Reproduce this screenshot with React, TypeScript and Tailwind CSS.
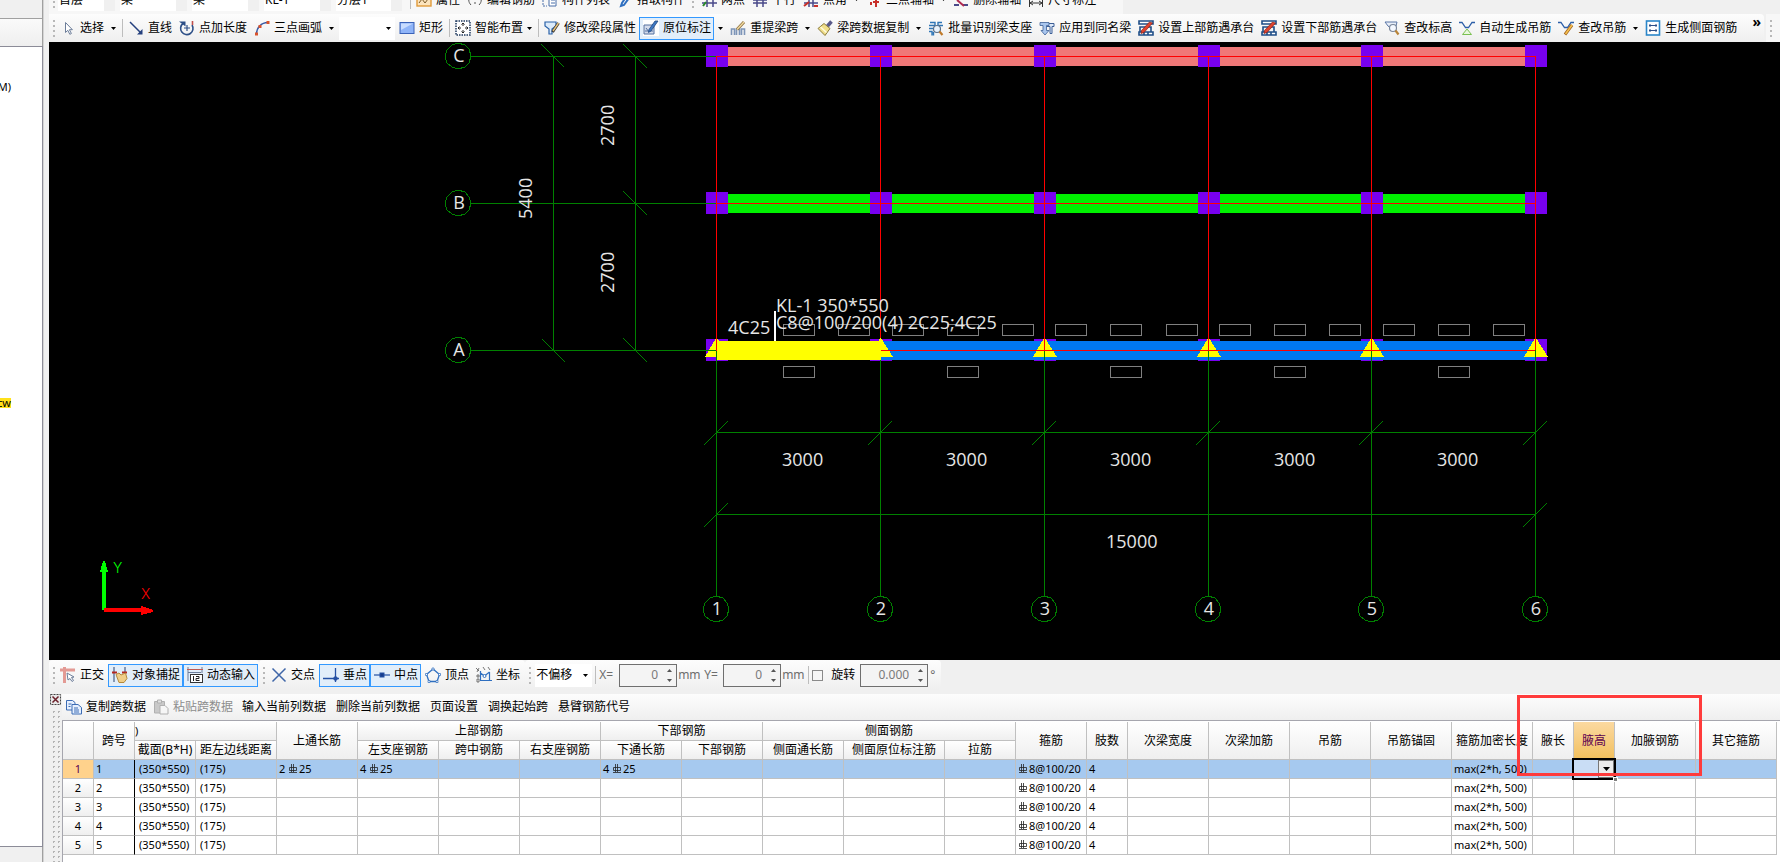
import type { ReactNode } from 'react';

const icons: Record<string, ReactNode> = {
  cursor: <path d="M5.5 2.5v10l2.3-2.2 2 4 1.6-.8-2-3.8h3z" fill="#fff" stroke="#6c7d99" />,
  line: (
    <g stroke="#25407e" fill="#25407e">
      <path d="M2 2l11 11" strokeWidth="1.5" />
      <path d="M14.5 14.5v-5.5l-5.5 5.5z" stroke="none" />
    </g>
  ),
  addLength: (
    <g fill="none" stroke="#2d4f87" strokeWidth="1.6">
      <path d="M4 3.500a6.200 6.200 0 1 0 9 1.500" />
      <path d="M8 5v6M5 8h6" strokeWidth="1.200" />
      <path d="M0 1.500h6.500v5z" fill="#2d4f87" stroke="none" />
      <path d="M13.500 1v4" stroke="#c0504d" />
    </g>
  ),
  arc: (
    <g fill="none" stroke="#3b5ba5" strokeWidth="1.4">
      <path d="M2.500 14C2.500 8 7 2.500 14 2.500" />
      <path d="M1 12.500h3v3H1zM4.500 5h3v3h-3zM12.500 1h3v3h-3z" fill="#d9532c" stroke="none" />
    </g>
  ),
  rect: (
    <g>
      <rect x="1" y="2.500" width="14" height="11" fill="#8fb4f8" stroke="#3a62b8" />
      <path d="M2 3.500h12L2 10z" fill="#c8dcff" />
    </g>
  ),
  smart: (
    <g>
      <rect x="1" y="1" width="14" height="14" fill="#fff" stroke="#1f3a5f" strokeWidth="1.5" strokeDasharray="1.5 1" />
      <path d="M8 3v3M8 10v3M3 8h3M10 8h3M6.500 4.500L8 3l1.500 1.500M6.500 11.500L8 13l1.500-1.500M4.500 6.500L3 8l1.500 1.500M11.500 6.500L13 8l-1.500 1.500" fill="none" stroke="#222" />
    </g>
  ),
  editProps: (
    <g fill="none">
      <path d="M1 2h11v4L8 9v5H5V9L1 6z" fill="#dcebfa" stroke="#2b62a8" strokeWidth="1.200" />
      <path d="M14.500 3l-6 9" stroke="#333" strokeWidth="3" />
      <path d="M14.500 3l-5.500 8" stroke="#e8c27a" strokeWidth="1.5" />
    </g>
  ),
  original: (
    <g>
      <rect width="16" height="16" fill="#fff" />
      <path d="M1 5h10v9H1z" fill="#d4dcec" stroke="#54719f" />
      <path d="M3 8l3 4 2-4M2 11h8" stroke="#54719f" fill="none" />
      <path d="M15 1L8 11l-2.500 1.500.5-3L12 1z" fill="#3d78c4" stroke="#24497f" strokeWidth=".8" />
    </g>
  ),
  respan: (
    <g fill="none">
      <path d="M1.500 15V9h3v6M6.500 15V9h3v6M11.500 15V9h3v6" stroke="#7d95b8" strokeWidth="1.6" />
      <path d="M14 2L7 9.500" stroke="#8a6d3b" strokeWidth="3" />
      <path d="M14 2L7 9.500" stroke="#f0d9a0" strokeWidth="1.5" />
    </g>
  ),
  brush: (
    <g>
      <path d="M14.500 1.500l-4 4.500" stroke="#5a5a8a" strokeWidth="3.500" />
      <path d="M7 3.500l6 5-5 7-7-7z" fill="#f1df8a" stroke="#8a7a3a" />
      <path d="M3.500 7l6 5.500" stroke="#fffbe0" strokeWidth="1.5" />
    </g>
  ),
  batch: (
    <g fill="none" stroke="#2e75b6">
      <path d="M2 2.500h5v3H1M14 2.500h-4v3h5M1 8.500h4M1 11.500h3v4M5.500 12v3.500" strokeWidth="1.400" />
      <circle cx="9" cy="9" r="3.500" fill="#e8f2fc" stroke="#5a6f88" strokeWidth="1.200" />
      <path d="M11.500 11.500l3 3.500" stroke="#c07a2a" strokeWidth="2.200" />
    </g>
  ),
  applySame: (
    <g fill="#dfeafa" stroke="#3c5f96">
      <path d="M5 3.500h10v3h-2v7h-2v-7H5z" />
      <path d="M1 2.500h9v3H7.500v5H10l-4 4.500-4-4.500h2v-5H1z" fill="#a9c6ee" strokeWidth=".8" />
    </g>
  ),
  cap: (
    <g>
      <path d="M1 1h14v3H1zM1 12h14v3H1z" fill="#fff" stroke="#1f4e88" strokeWidth="1.600" />
      <path d="M2 12V7h11v5M6 12v3M10 12v3" fill="none" stroke="#1f4e88" strokeWidth="1.600" />
      <path d="M14.500 3L6 12.500l-3 1 .5-3L11.500 2z" fill="#e0432f" stroke="#8a1f14" strokeWidth=".7" />
    </g>
  ),
  elevation: (
    <g>
      <path d="M1 2h12l-1 4H8.500v3.500L4 6z" fill="#e8eef8" stroke="#5b76a6" />
      <circle cx="9" cy="8" r="3.500" fill="#f4f8ff" stroke="#7a869a" strokeWidth="1.200" />
      <path d="M11.500 10.500l3 4" stroke="#b9853a" strokeWidth="2.200" />
    </g>
  ),
  hanging: (
    <g fill="none">
      <path d="M0 2.500h3l3.500 5h3l3.500-5h3" stroke="#2d5fa8" strokeWidth="1.300" />
      <path d="M8 9l4.500 5.500h-9z" fill="#e9f8dd" stroke="#79c050" />
    </g>
  ),
  hangingEdit: (
    <g fill="none">
      <path d="M0 2.500h3l3.500 5h3l3.500-5h3" stroke="#2d5fa8" strokeWidth="1.300" />
      <path d="M14 5l-7 9.500" stroke="#a2621a" strokeWidth="3" />
      <path d="M14 5l-6.500 9" stroke="#f5c050" strokeWidth="1.600" />
    </g>
  ),
  side: (
    <g fill="none">
      <rect x="1.500" y="1" width="13" height="14" fill="#fff" stroke="#2b86c9" strokeWidth="1.600" />
      <path d="M4 5.500h8M4 10.500h8M5 4v3M11 4v3M5 9v3M11 9v3" stroke="#2d4f87" />
    </g>
  ),
  ortho: (
    <g fill="none">
      <path d="M0 3h15M4.500 0v16" stroke="#e39a94" strokeWidth="3" />
      <path d="M7 6l1 7 2-1.500 2 3 1.500-1-2-3L14 10z" fill="#fff" stroke="#6c7d99" />
    </g>
  ),
  snap: (
    <g fill="none">
      <path d="M2 0v15M13 0v6" stroke="#4a5f85" strokeWidth="1.200" />
      <path d="M0 5.500h5M10 5.500h5" stroke="#b3261e" strokeWidth="2" />
      <path d="M4 7.500l3-1.500 2 2 4.500-2 1.500 5.500-3 4H7z" fill="#f0ce88" stroke="#b58a3c" />
    </g>
  ),
  dynamic: (
    <g fill="none">
      <path d="M1 0v14M15 0v6M1 5.500h13" stroke="#6c7d99" />
      <path d="M0 2.500h16" stroke="#c05a50" />
      <rect x="3.500" y="7.500" width="12" height="8" fill="#fff" stroke="#333" />
      <path d="M6.500 9v5M9 9.500h3v2H9v2h3.500" stroke="#222" />
    </g>
  ),
  cross: <path d="M1.500 1.500l13 13M14.500 1.500l-13 13" stroke="#3f66a8" strokeWidth="1.5" />,
  perp: (
    <g stroke="#2450a4">
      <path d="M0 11.500h16M12.500 1v14" strokeWidth="1.300" fill="none" />
      <circle cx="12.500" cy="11.500" r="1.800" fill="#2450a4" />
    </g>
  ),
  mid: (
    <g stroke="#2450a4">
      <path d="M0 8h16" strokeWidth="1.200" />
      <rect x="6" y="6" width="4" height="4" fill="#173c8c" />
    </g>
  ),
  vertex: (
    <g fill="none" stroke="#2f6fc0">
      <path d="M8 2l6.500 5.500-2.500 7H4l-2.500-7z" strokeWidth="1.300" />
      <path d="M7 1h2v2H7zM.5 6.500h2v2h-2zM13.500 6.500h2v2h-2zM3 13.500h2v2H3zM11 13.500h2v2h-2z" fill="#fff" strokeWidth=".7" />
    </g>
  ),
  coord: (
    <g fill="none" stroke="#2f6fc0">
      <path d="M4.500 4v9.500H16M4.500 6l4 3 5-4M13.500 5v8" strokeWidth="1.200" />
      <path d="M0 1l3 3M3 1L1 5M1 8h2v2H1zM1 12h2v3H1zM7 0l2 3M12 0l2 3" stroke="#555" strokeWidth=".8" />
      <circle cx="8.500" cy="9" r="1.5" fill="#fff" />
    </g>
  ),
  copy: (
    <g fill="#e6f0ff" stroke="#3c6cb4">
      <path d="M.5 1.500h6l2.500 2V11H.5z" />
      <path d="M6 5.500h6l3.500 3V15H6z" />
      <path d="M2.500 5h3M2.500 7.500h2M8 9h4M8 11h5M8 13h5" />
    </g>
  ),
  paste: (
    <g fill="#e2e2e2" stroke="#b0b0b0">
      <path d="M1.500 2.500h10V14h-10z" fill="#c9c9c9" />
      <path d="M4.500 1h4v3h-4z" />
      <path d="M7 6.500h5l3 3V15H7z" fill="#f6f6f6" />
    </g>
  ),
  props: (
    <g>
      <rect x="1" y="1" width="14" height="13" fill="#fce4bd" stroke="#e09a3a" strokeWidth="1.400" />
      <path d="M3 11l3-4 3 4 3-4" stroke="#7a5a2a" fill="none" />
    </g>
  ),
  editBar: <path d="M4 3C1 6 1 10 4 13M12 3c3 3 3 7 0 10M7 11h2" stroke="#555" fill="none" />,
  list: (
    <g fill="#fff" stroke="#4a6fa8">
      <path d="M1 8v6h4" fill="none" strokeDasharray="2 1" />
      <path d="M7 3h7v11H7z" />
      <path d="M9 8h4M9 11h4" />
    </g>
  ),
  pick: <path d="M12 6l-5 7-3 1 1-3 4-6" stroke="#2f6fc0" strokeWidth="2" fill="none" />,
  axisTwo: (
    <g>
      <path d="M1 11h15M6 4v11M12 4v11" stroke="#4a4a8a" strokeWidth="1.5" />
      <path d="M2 14l3-4" stroke="#2a8a2a" strokeWidth="2" />
    </g>
  ),
  axisPar: <path d="M1 11h14M5 4v11M11 4v11M1 8h14" stroke="#4a4a8a" strokeWidth="1.5" />,
  axisAngle: (
    <g stroke="#4a4a8a" strokeWidth="1.5">
      <path d="M1 11h14M6 5v10M10 5v10" />
      <path d="M1 14l5-4M11 14h4" stroke="#c8302a" strokeWidth="2" />
    </g>
  ),
  axisThree: <path d="M5 10v3M10 6v9M7 10h6" stroke="#c8302a" strokeWidth="2" />,
  axisDel: (
    <g strokeWidth="2">
      <path d="M1 13h5M10 13h5" stroke="#4a4a8a" />
      <path d="M4 8l7 6" stroke="#b02a50" />
    </g>
  ),
  dim: <path d="M1.500 5v10M14.500 5v10M2 11h12M5 9l-3 2 3 2M11 9l3 2-3 2" stroke="#333" fill="none" />,
};

function Icon({ name }: { name: string }) {
  return (
    <svg viewBox="0 0 16 16" className="size-4 shrink-0" aria-hidden="true">
      {icons[name]}
    </svg>
  );
}

function Caret() {
  return (
    <svg viewBox="0 0 5 3" className="h-[3px] w-[5px] shrink-0" aria-hidden="true">
      <path d="M0 0h5L2.5 3z" fill="#000" />
    </svg>
  );
}

function Grip() {
  return (
    <div className="ml-1 flex w-[3px] shrink-0 flex-col gap-[3px]">
      {[0, 1, 2, 3].map((i) => (
        <span key={i} className="size-[2px] bg-[#b8b8b8]"></span>
      ))}
    </div>
  );
}

function Separator() {
  return <div className="mr-px ml-[3px] h-[18px] w-px shrink-0 bg-[#bdbdbd]"></div>;
}

type ToolProps = { icon?: string; label: string; pressed?: boolean; caret?: boolean; disabled?: boolean };

function Tool({ icon, label, pressed, caret, disabled }: ToolProps) {
  return (
    <button
      type="button"
      disabled={disabled}
      aria-pressed={pressed}
      className={`flex h-[23px] shrink-0 items-center gap-1 pr-[3px] pl-1 ${pressed ? 'bg-[#e2eefa] outline-1 -outline-offset-1 outline-[#3399ff]' : ''} ${disabled ? 'text-[#8d8d8d]' : ''}`}
    >
      {icon && <Icon name={icon} />}
      {label}
      {caret && <Caret />}
    </button>
  );
}

function DropButton({ label }: { label: string }) {
  return (
    <button type="button" aria-label={label} className="flex h-[23px] w-3 shrink-0 items-center justify-center">
      <Caret />
    </button>
  );
}

function TopCombo({ label, value, width }: { label: string; value: string; width: string }) {
  return (
    <div className={`mr-[5px] flex h-[22px] shrink-0 bg-white ${width}`}>
      <select aria-label={label} className="min-w-0 flex-1 appearance-none px-px">
        <option>{value}</option>
      </select>
      <span className="w-[11px] bg-[#f0f0f0]"></span>
    </div>
  );
}

function TopToolbar() {
  return (
    <div className="flex h-[14px] items-end overflow-hidden bg-[#f0f0f0]">
      <div className="flex h-[36px] shrink-0 items-center bg-[#f7f7f7] pt-[7px] pr-6">
        <div className="mr-[2px]">
          <Grip />
        </div>
        <TopCombo label="楼层" value="首层" width="w-[57px]" />
        <TopCombo label="构件类别" value="梁" width="w-[67px]" />
        <TopCombo label="构件类型" value="梁" width="w-[67px]" />
        <TopCombo label="构件名称" value="KL-1" width="w-[67px]" />
        <TopCombo label="分层" value="分层1" width="w-[66px]" />
        <Separator />
        <Tool icon="props" label="属性" />
        <Tool icon="editBar" label="编辑钢筋" />
        <Tool icon="list" label="构件列表" />
        <Tool icon="pick" label="拾取构件" />
        <div className="mr-[2px]">
          <Grip />
        </div>
        <Tool icon="axisTwo" label="两点" />
        <Tool icon="axisPar" label="平行" />
        <Tool icon="axisAngle" label="点角" />
        <DropButton label="点角选项" />
        <Tool icon="axisThree" label="三点辅轴" />
        <DropButton label="三点辅轴选项" />
        <Tool icon="axisDel" label="删除辅轴" />
        <Tool icon="dim" label="尺寸标注" />
      </div>
    </div>
  );
}

function DrawToolbar() {
  return (
    <div className="flex h-7 bg-[#f0f0f0]">
      <div className="flex min-w-0 flex-1 items-center overflow-hidden rounded-r bg-linear-to-b from-[#fdfdfd] to-[#efefef]">
        <Grip />
        <Tool icon="cursor" label="选择" />
        <DropButton label="选择选项" />
        <Separator />
        <Tool icon="line" label="直线" />
        <Tool icon="addLength" label="点加长度" />
        <Tool icon="arc" label="三点画弧" />
        <DropButton label="画弧选项" />
        <div className="relative ml-[2px] flex h-[23px] w-[56px] shrink-0 items-center bg-white">
          <select aria-label="半径" className="h-full w-full appearance-none">
            <option></option>
          </select>
          <span className="pointer-events-none absolute right-1">
            <Caret />
          </span>
        </div>
        <Tool icon="rect" label="矩形" />
        <Separator />
        <Tool icon="smart" label="智能布置" caret />
        <Separator />
        <Tool icon="editProps" label="修改梁段属性" />
        <Tool icon="original" label="原位标注" pressed />
        <DropButton label="标注选项" />
        <Tool icon="respan" label="重提梁跨" />
        <DropButton label="重提梁跨选项" />
        <Tool icon="brush" label="梁跨数据复制" />
        <DropButton label="数据复制选项" />
        <Tool icon="batch" label="批量识别梁支座" />
        <Tool icon="applySame" label="应用到同名梁" />
        <Tool icon="cap" label="设置上部筋遇承台" />
        <Tool icon="cap" label="设置下部筋遇承台" />
        <Tool icon="elevation" label="查改标高" />
        <Tool icon="hanging" label="自动生成吊筋" />
        <Tool icon="hangingEdit" label="查改吊筋" />
        <DropButton label="查改吊筋选项" />
        <Tool icon="side" label="生成侧面钢筋" />
        <button type="button" aria-label="更多" className="ml-auto h-full shrink-0 pr-[3px] pb-3 text-sm leading-4 font-bold">
          »
        </button>
      </div>
      <div className="ml-[2px] flex w-[14px] shrink-0 items-center bg-[#f7f7f7]">
        <Grip />
      </div>
    </div>
  );
}

/* Plan view */
const axisX = [667, 831, 995, 1159, 1322, 1486];
const axisY = [
  { name: 'C', y: 14 },
  { name: 'B', y: 161 },
  { name: 'A', y: 308 },
];
const topSlots = [734, 789, 843, 898, 953, 1006, 1061, 1117, 1170, 1225, 1280, 1334, 1389, 1444];
const bottomSlots = [734, 898, 1061, 1225, 1389];
const GREEN = '#008000';
const RED = '#ff0000';

function Bubble({ x, y, label }: { x: number; y: number; label: string }) {
  const points = Array.from({ length: 12 }, (_, i) => {
    const a = (i * Math.PI) / 6;
    return `${Math.round(x + 13 * Math.cos(a))},${Math.round(y + 13 * Math.sin(a))}`;
  }).join(' ');
  return (
    <g>
      <polygon points={points} fill="none" stroke={GREEN} shapeRendering="crispEdges" />
      <text x={x + 1} y={y + 6} textAnchor="middle">
        {label}
      </text>
    </g>
  );
}

function Support({ x }: { x: number }) {
  return <path d={`M${x} 296h1l12 19h-24z`} fill="#ffff00" />;
}

function PlanCanvas() {
  const first = axisX[0];
  const last = axisX[5];
  return (
    <svg
      className="min-h-[560px] w-full flex-1 bg-black font-['Open_Sans','Noto_Sans',sans-serif] text-[18px]"
      fill="#e6e6e6"
      role="img"
      aria-label="梁平面图"
    >
      <g shapeRendering="crispEdges">
        {/* beams on C and B, columns on all axes */}
        <rect x={first} y="5" width={last - first} height="19" fill="#f07878" />
        <rect x={first} y="152" width={last - first} height="19" fill="#00f000" />
        {axisY.map((row) =>
          axisX.map((x) => <rect key={row.name + x} x={x - 10} y={row.y - 11} width="22" height="22" fill="#7800f0" />)
        )}
        <rect x={first} y="299" width={last - first} height="19" fill="#0078f0" />
        {axisX.map((x) => (
          <Support key={x} x={x} />
        ))}

        {/* grid lines */}
        <g stroke={GREEN}>
          {axisY.map((row) => (
            <path key={row.name} d={`M422 ${row.y + 0.5}H${first}`} />
          ))}
          {axisX.map((x) => (
            <path key={x} d={`M${x + 0.5} 308V554`} />
          ))}
          <path d="M504.5 14V308M586.5 14V308" />
          <path d={`M${first} 390.5H${last}M${first} 472.5H${last}`} />
          {axisY.map((row) => (
            <path key={row.name} d={`M574 ${row.y - 12}l24 24`} />
          ))}
          <path d="M492 2l23 23M493 297l23 23" />
          {axisX.map((x) => (
            <path key={x} d={`M${x - 12} 403l24-24`} />
          ))}
          <path d={`M${first - 12} 485l24-24M${last - 12} 485l24-24`} />
        </g>
        <g stroke={RED}>
          {axisY.map((row) => (
            <path key={row.name} d={`M${first} ${row.y + 0.5}H${last}`} />
          ))}
          {axisX.map((x) => (
            <path key={x} d={`M${x + 0.5} 14V308`} />
          ))}
        </g>

        {/* selected span */}
        <rect x="668" y="299" width="164" height="19" fill="#ffff00" />
        <Support x={axisX[1]} />
        <path d="M832 308.5h14" stroke={RED} />

        <g fill="none" stroke="#808080">
          {topSlots.map((x) => (
            <rect key={x} x={x + 0.5} y="282.5" width="31" height="11" />
          ))}
          {bottomSlots.map((x) => (
            <rect key={x} x={x + 0.5} y="324.5" width="31" height="11" />
          ))}
        </g>
        <path d="M725 269h2v30h-2z" fill="#fff" />
      </g>

      {axisY.map((row) => (
        <Bubble key={row.name} x={409} y={row.y} label={row.name} />
      ))}
      {axisX.map((x, i) => (
        <Bubble key={x} x={x} y={567} label={String(i + 1)} />
      ))}

      <text x="727" y="270">KL-1 350*550</text>
      <text x="727" y="287">C8@100/200(4) 2C25;4C25</text>
      <text x="679" y="292">4C25</text>
      {axisX.slice(0, 5).map((x) => (
        <text key={x} x={x + 66} y="424">
          3000
        </text>
      ))}
      <text x="1057" y="506">15000</text>
      <text transform="translate(565 104) rotate(-90)">2700</text>
      <text transform="translate(565 251) rotate(-90)">2700</text>
      <text transform="translate(483 177) rotate(-90)">5400</text>

      {/* UCS marker */}
      <g shapeRendering="crispEdges">
        <path d="M53 568V530h-2l3-11h2l3 11h-2v38z" fill="#00ff00" />
        <path d="M55 566h37v-2l12 4v2l-12 3v-3H55z" fill="#ff0000" />
      </g>
      <g className="font-['Inter',sans-serif] text-[14px] font-light">
        <text x="64" y="531" fill="#00ff00">Y</text>
        <text x="92" y="557" fill="#ff0000">X</text>
      </g>
    </svg>
  );
}

function Spin({ id, value, width }: { id: string; value: string; width: string }) {
  return (
    <div className={`flex h-[23px] shrink-0 border border-[#6f6f6f] bg-[#f4f4f4] ${width}`}>
      <input id={id} defaultValue={value} className="min-w-0 flex-1 bg-transparent pr-[6px] text-right text-[#7a7a7a]" />
      <span className="flex w-3 flex-col justify-between py-1 pl-[3px]">
        <button type="button" aria-label="增加" className="h-[3px] w-[5px]">
          <svg viewBox="0 0 5 3" className="block h-[3px] w-[5px]">
            <path d="M0 3h5L2.5 0z" fill="#555" />
          </svg>
        </button>
        <button type="button" aria-label="减少" className="h-[3px] w-[5px]">
          <svg viewBox="0 0 5 3" className="block h-[3px] w-[5px]">
            <path d="M0 0h5L2.5 3z" fill="#555" />
          </svg>
        </button>
      </span>
    </div>
  );
}

function SnapToolbar() {
  const group = 'flex h-[30px] shrink-0 items-center rounded bg-linear-to-b from-[#fdfdfd] to-[#efefef]';
  return (
    <div className="flex h-[34px] items-start overflow-hidden bg-[#f0f0f0]">
      <div className={`${group} pr-px`}>
        <Grip />
        <Tool icon="ortho" label="正交" />
        <div className="ml-px flex">
          <Tool icon="snap" label="对象捕捉" pressed />
          <Tool icon="dynamic" label="动态输入" pressed />
        </div>
      </div>
      <div className={`${group} pr-[2px]`}>
        <Grip />
        <div className="mx-px">
          <Tool icon="cross" label="交点" />
        </div>
        <Tool icon="perp" label="垂点" pressed />
        <Tool icon="mid" label="中点" pressed />
        <Tool icon="vertex" label="顶点" />
        <Tool icon="coord" label="坐标" />
      </div>
      <div className={`${group} pr-[6px] text-[#6d6d6d]`}>
        <Grip />
        <div className="relative ml-[3px] flex h-[23px] w-[57px] items-center bg-white text-black">
          <select aria-label="偏移方式" className="h-full w-full appearance-none pl-px">
            <option>不偏移</option>
          </select>
          <span className="pointer-events-none absolute right-1">
            <Caret />
          </span>
        </div>
        <Separator />
        <label htmlFor="offset-x" className="ml-[2px] w-5">X=</label>
        <Spin id="offset-x" value="0" width="w-[58px]" />
        <span className="ml-px w-6">mm</span>
        <label htmlFor="offset-y" className="ml-[2px] w-[19px]">Y=</label>
        <Spin id="offset-y" value="0" width="w-[58px]" />
        <span className="ml-px w-[23px]">mm</span>
        <Separator />
        <input
          id="rotate"
          type="checkbox"
          className="mr-2 ml-[2px] size-[11px] appearance-none border border-[#8a8a8a] bg-[#f6f6f6]"
        />
        <label htmlFor="rotate" className="mr-[5px] text-black">旋转</label>
        <Spin id="rotate-angle" value="0.000" width="w-[68px]" />
        <label htmlFor="rotate-angle" className="ml-[2px]">°</label>
      </div>
    </div>
  );
}

/* Span data table */
const colWidths = [31, 41, 61, 81, 81, 81, 81, 81, 81, 81, 81, 101, 71, 71, 41, 81, 81, 81, 81, 81, 41, 41, 81, 81];
const tailHeads = ['箍筋', '肢数', '次梁宽度', '次梁加筋', '吊筋', '吊筋锚固', '箍筋加密长度', '腋长', '腋高', '加腋钢筋', '其它箍筋'];
const subHeads = [
  '截面(B*H)', '距左边线距离', '左支座钢筋', '跨中钢筋', '右支座钢筋', '下通长筋', '下部钢筋', '侧面通长筋', '侧面原位标注筋', '拉筋',
];
const spans = [1, 2, 3, 4, 5];

const head = 'border-r border-b border-[#c0c0c0] bg-linear-to-b from-white to-[#efefef] p-0 text-center font-normal';

function Rebar({ count, size }: { count?: string; size: string }) {
  return (
    <span className="flex items-center">
      {count && <span className="w-[9px]">{count}</span>}
      <svg viewBox="0 0 10 10" className="mr-px size-[10px] shrink-0" role="img" aria-label="三级钢">
        <path d="M1.5 3.5h7v3h-7zM3.5 0v8M5.5 0v8M1 8.5h8" fill="none" stroke="#222" strokeWidth=".8" />
      </svg>
      {size}
    </span>
  );
}

function cellText(col: number, row: number): ReactNode {
  const selected = row === 0;
  switch (col) {
    case 1:
      return spans[row];
    case 2:
      return '(350*550)';
    case 3:
      return '(175)';
    case 4:
      return selected && <Rebar count="2" size="25" />;
    case 5:
    case 8:
      return selected && <Rebar count="4" size="25" />;
    case 13:
      return <Rebar size="8@100/20" />;
    case 14:
      return '4';
    case 19:
      return 'max(2*h, 500)';
    default:
      return null;
  }
}

function SpanTable() {
  return (
    <table className="w-full table-fixed border-separate border-spacing-0">
      <colgroup>
        {colWidths.map((w, i) => (
          <col key={i} style={{ width: w }} />
        ))}
      </colgroup>
      <thead>
        <tr className="h-[19px]">
          <th rowSpan={2} className={head} aria-label="行"></th>
          <th rowSpan={2} className={head}>跨号</th>
          <th colSpan={2} className="border-r border-b border-[#c0c0c0] bg-linear-to-b from-white to-[#efefef] p-0 text-left text-[11px] leading-4 font-normal">
            )
          </th>
          <th rowSpan={2} className={head}>上通长筋</th>
          <th colSpan={3} className={head}>上部钢筋</th>
          <th colSpan={2} className={head}>下部钢筋</th>
          <th colSpan={3} className={head}>侧面钢筋</th>
          {tailHeads.map((name) => (
            <th
              key={name}
              rowSpan={2}
              className={
                name === '腋高'
                  ? 'border-r border-b border-[#c0c0c0] bg-linear-to-b from-[#fbd9a0] to-[#f2c05c] p-0 font-normal text-[#5c0050]'
                  : head
              }
            >
              {name}
            </th>
          ))}
        </tr>
        <tr className="h-[19px]">
          {subHeads.map((name) => (
            <th key={name} className={head}>
              {name}
            </th>
          ))}
        </tr>
      </thead>
      <tbody className="text-[11px] leading-4">
        {spans.map((span, row) => (
          <tr key={span} className={`h-[19px] ${row === 0 ? 'bg-[#a6c9ef]' : 'bg-white'}`}>
            {colWidths.map((_, col) => {
              if (col === 0) {
                return (
                  <th
                    key={col}
                    scope="row"
                    className={row === 0 ? 'border-r border-b border-[#c0c0c0] bg-[#ffd28c] p-0 font-normal text-[#5c0050]' : head}
                  >
                    {span}
                  </th>
                );
              }
              if (col === 21 && row === 0) {
                return (
                  <td key={col} className="relative border-r border-b border-[#c0c0c0] p-0">
                    <div className="absolute -inset-[2px] flex border-2 border-black bg-[#c9ddf5]">
                      <select aria-label="腋高" className="min-w-0 flex-1 appearance-none">
                        <option></option>
                      </select>
                      <span className="pointer-events-none flex w-4 items-center justify-center border border-[#777] bg-[#ececec]">
                        <svg viewBox="0 0 7 4" className="h-1 w-[7px]">
                          <path d="M0 0h7L3.5 4z" fill="#000" />
                        </svg>
                      </span>
                      <span className="absolute -right-[4px] -bottom-[4px] size-[5px] border border-white bg-[#808080]"></span>
                    </div>
                  </td>
                );
              }
              return (
                <td
                  key={col}
                  className={`overflow-hidden border-r border-b border-[#c0c0c0] py-0 pr-0 whitespace-nowrap ${col === 1 ? 'border-r-black' : ''} ${col === 2 || col === 3 ? 'pl-1' : 'pl-[2px]'}`}
                >
                  {cellText(col, row)}
                </td>
              );
            })}
          </tr>
        ))}
      </tbody>
    </table>
  );
}

function SpanPanel() {
  return (
    <section className="relative flex">
      <div className="flex w-[13px] shrink-0 flex-col items-center bg-[#f0f0f0]">
        <button type="button" aria-label="关闭" className="size-[11px]">
          <svg viewBox="0 0 11 11" className="block size-[11px]">
            <rect x=".5" y=".5" width="10" height="10" fill="#e8e8e8" stroke="#444" strokeDasharray="2 1" />
            <path d="M2.5 2.5l6 6M8.5 2.5l-6 6" stroke="#6b1f2a" strokeWidth="1.5" />
          </svg>
        </button>
        <div className="mt-1 w-[10px] flex-1 bg-[radial-gradient(circle,#b4b4b4_1px,transparent_1px)] bg-size-[5px_5px]"></div>
      </div>
      <div className="min-w-0 flex-1">
        <div className="flex h-[26px] items-center overflow-hidden bg-linear-to-b from-[#fdfdfd] to-[#efefef]">
          <Tool icon="copy" label="复制跨数据" />
          <Tool icon="paste" label="粘贴跨数据" disabled />
          <div className="ml-[2px] flex gap-[3px]">
            <Tool label="输入当前列数据" />
            <Tool label="删除当前列数据" />
            <Tool label="页面设置" />
            <Tool label="调换起始跨" />
            <Tool label="悬臂钢筋代号" />
          </div>
        </div>
        <div className="border-t border-l border-[#a6a6ae] bg-white pt-px pr-[3px] pb-[7px]">
          <SpanTable />
        </div>
      </div>
      <div className="pointer-events-none absolute top-px right-[78px] h-[81px] w-[185px] border-3 border-[#ff3b3b]"></div>
    </section>
  );
}

function SidePanel() {
  return (
    <aside className="flex w-[49px] shrink-0 bg-[#f0f0f0]">
      <div className="flex w-11 flex-col border-r border-[#d4d4d4]">
        <div className="h-[19px] border-r border-b border-[#a0a0a0]"></div>
        <div className="h-[27px] border-r border-[#a0a0a0] bg-linear-to-b from-[#fafafa] to-[#efefef]"></div>
        <div className="flex-1 overflow-hidden border-t border-r border-b border-[#8c8c98] bg-white pt-[32px] text-[11px] leading-4">
          <p className="flex w-[11px] justify-end">M)</p>
          <p className="mt-[300px] flex w-[11px] justify-end">
            <mark className="my-[3px] bg-[#ffe11a] leading-[10px]">cw</mark>
          </p>
        </div>
        <div className="h-[15px] border-r border-[#a0a0a0]"></div>
      </div>
    </aside>
  );
}

export default function App() {
  return (
    <div className="flex min-h-screen w-full overflow-hidden bg-[#f0f0f0] font-['Noto_Sans','Noto_Sans_CJK_SC',sans-serif] text-xs whitespace-nowrap text-black">
      <SidePanel />
      <main className="flex min-w-0 flex-1 flex-col">
        <TopToolbar />
        <DrawToolbar />
        <PlanCanvas />
        <SnapToolbar />
        <SpanPanel />
      </main>
    </div>
  );
}
